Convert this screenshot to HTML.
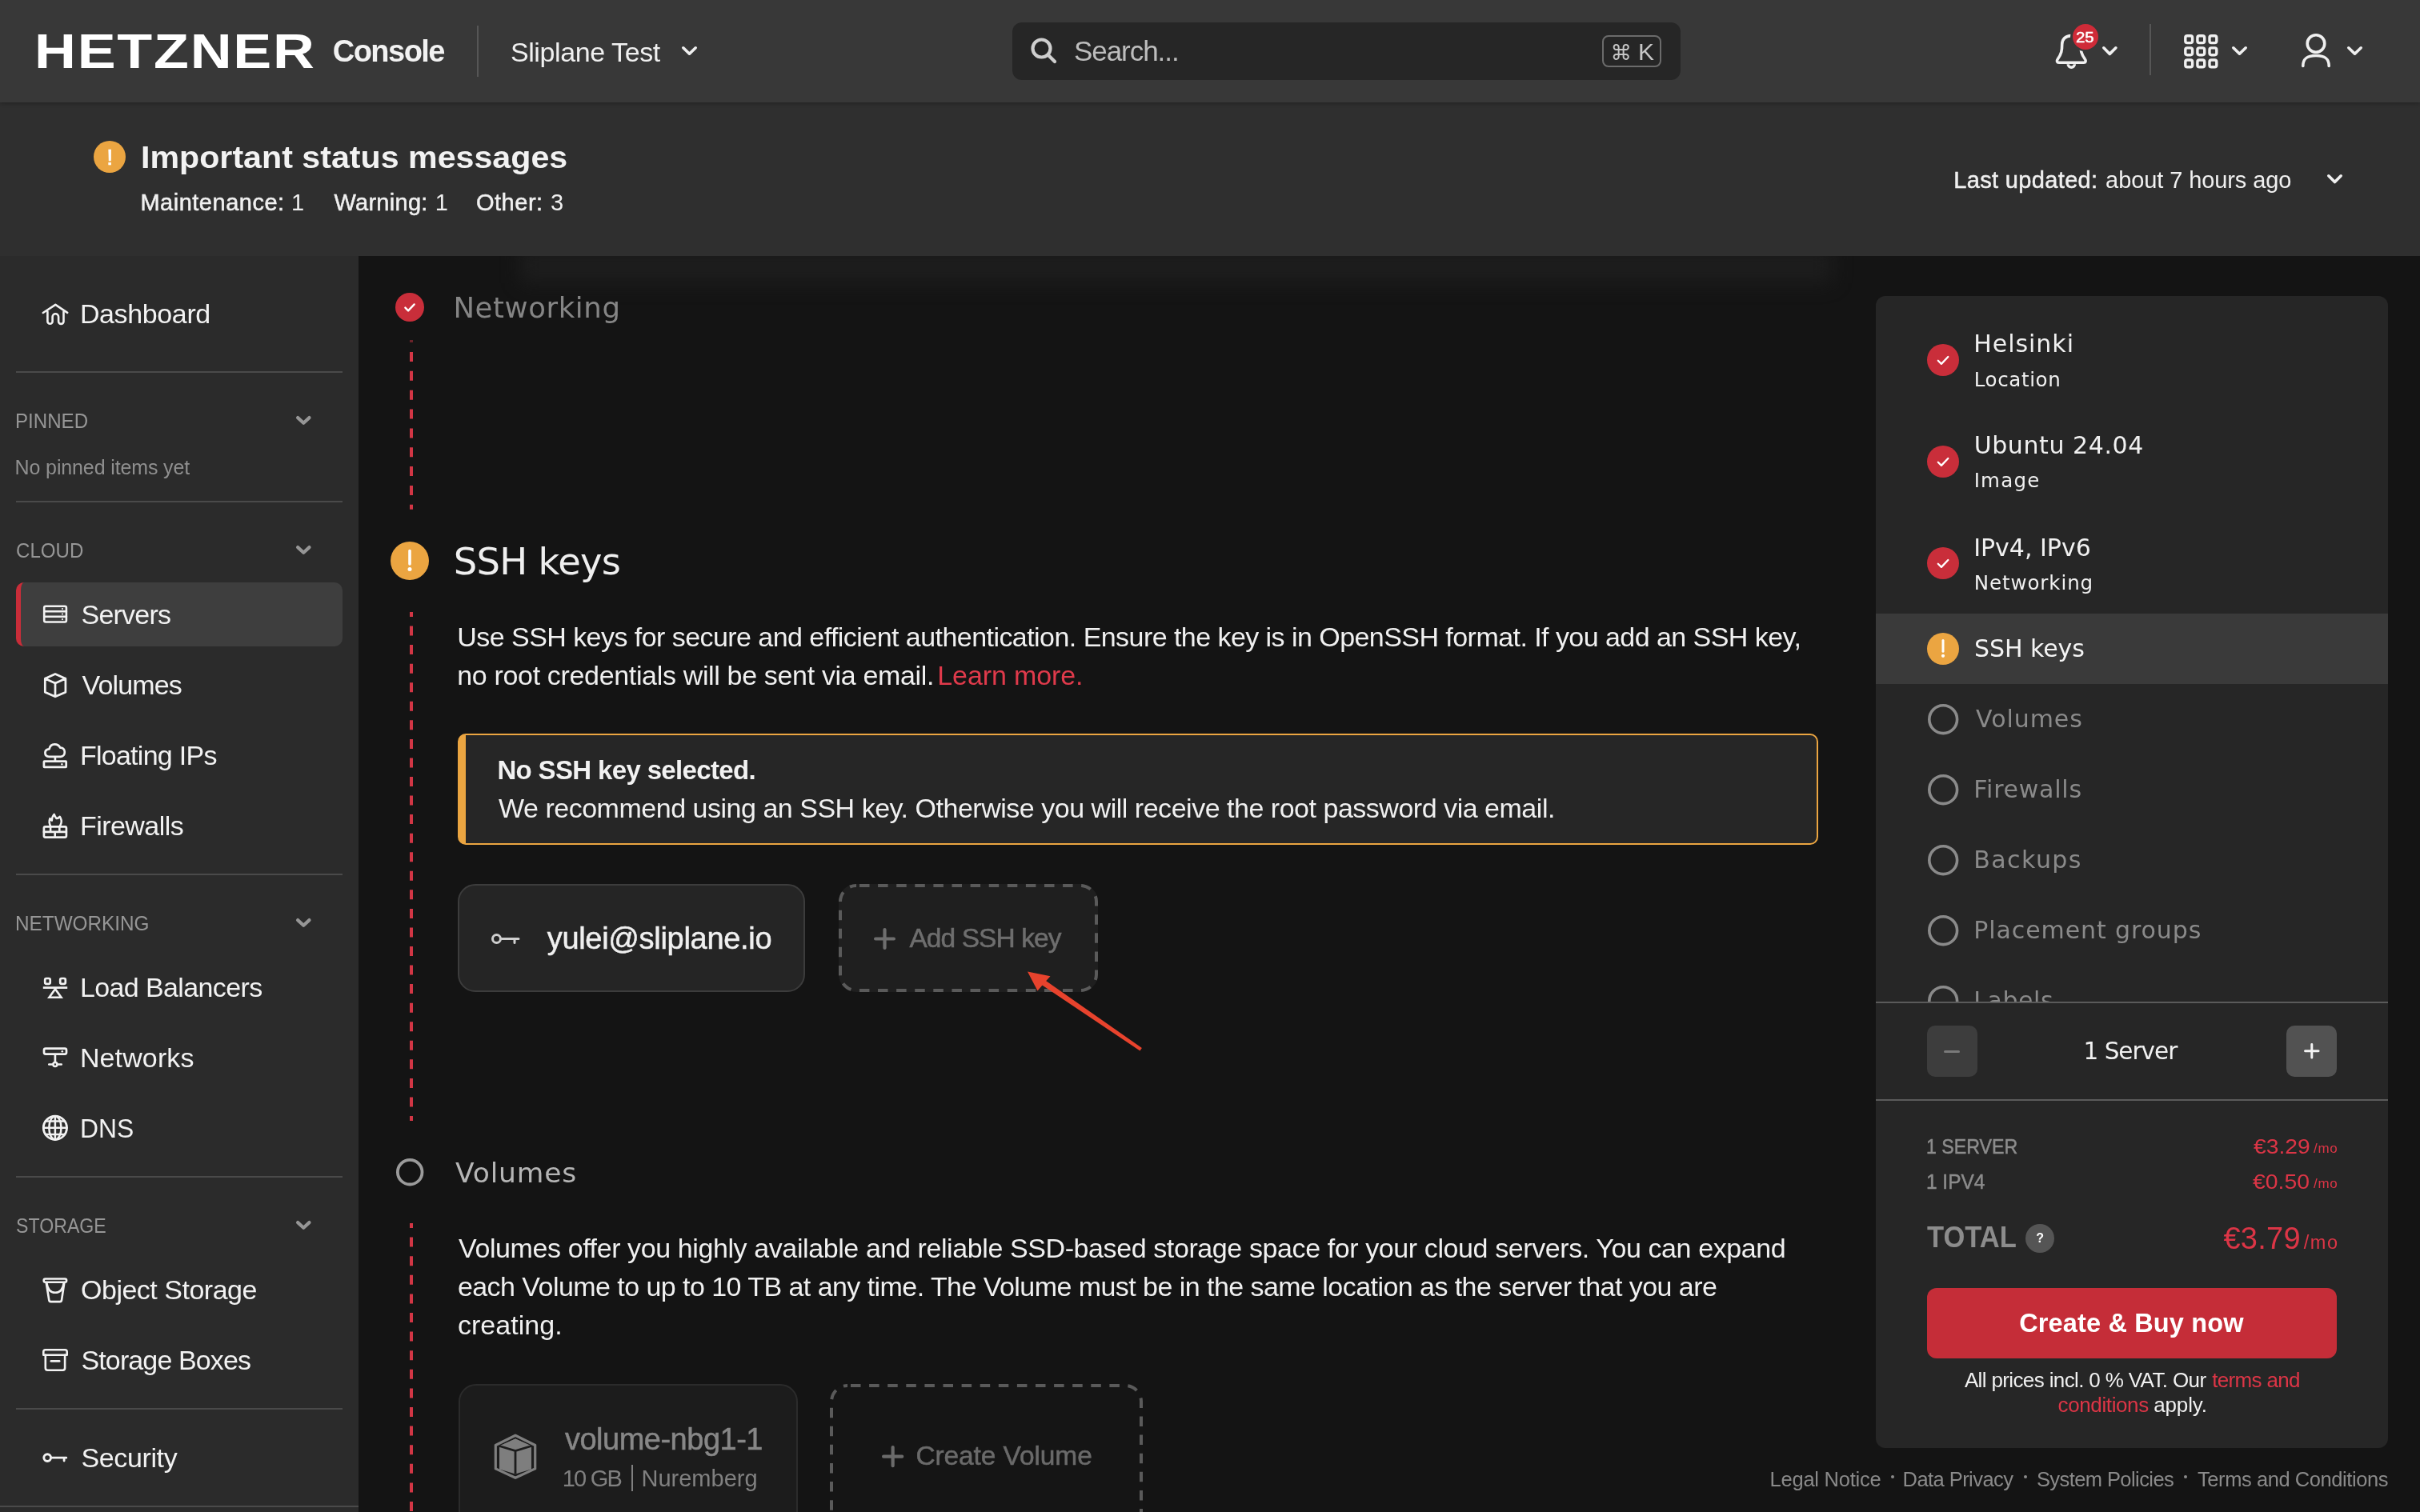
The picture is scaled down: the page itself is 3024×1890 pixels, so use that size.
<!DOCTYPE html>
<html lang="en"><head><meta charset="utf-8"><title>Hetzner Console</title><style>
*{box-sizing:border-box;margin:0;padding:0}
html,body{width:3024px;height:1890px;overflow:hidden;background:#141414}
body{position:relative;font-family:"Liberation Sans",sans-serif;color:#f0f0f0}
body *{position:absolute}
.t{white-space:nowrap;line-height:0;display:block}
svg{overflow:visible}
header,section,nav,main,aside,footer{will-change:transform}
h1,h2,strong,p,a,button{font-weight:400;font-family:inherit}
button{border:0}
a{text-decoration:none}
@media (max-width:1600px){html{zoom:.5}}
</style></head>
<body>
<header style="left:0px;top:0px;width:3024px;height:128px;background:#383838;box-shadow:0 1px 5px rgba(0,0,0,.3);z-index:5">
<span class="t" style='left:42.5px;top:63.9px;font-size:61.0px;color:#ffffff;font-weight:700;letter-spacing:1.50px;transform-origin:0 0;transform:scaleX(1.178);'>HETZNER</span>
<span class="t" style='left:415.8px;top:63.8px;font-size:38.0px;color:#f2f2f2;font-weight:700;letter-spacing:-1.54px;'>Console</span>
<div style="left:596px;top:32px;width:2px;height:64px;background:#565656"></div>
<span class="t" style='left:637.9px;top:64.5px;font-size:34.0px;color:#f0f0f0;letter-spacing:-0.40px;'>Sliplane Test</span>
<svg style="left:852px;top:57.5px;" width="19" height="11.0" viewBox="0 0 19 11.0" fill="none"><polyline points="1.8,1.8 9.5,9.2 17.2,1.8" stroke="#f0f0f0" stroke-width="3.6" stroke-linecap="round" stroke-linejoin="round"/></svg>
<div style="left:1265px;top:28px;width:835px;height:72px;background:#262626;border-radius:12px">
<svg style="left:22px;top:18px;" width="36" height="36" viewBox="0 0 36 36" fill="none"><circle cx="14.5" cy="14.5" r="11" stroke="#cfcfcf" stroke-width="4.2"/><path d="M23 23 L31 31" stroke="#cfcfcf" stroke-width="4.2" stroke-linecap="round"/></svg>
<span class="t" style='left:76.9px;top:35.9px;font-size:35.0px;color:#bdbdbd;letter-spacing:-1.03px;'>Search...</span>
<div style="left:737px;top:16px;width:74px;height:40px;border:2px solid #6b6b6b;border-radius:8px"></div>
<span class="t" style='left:747.6px;top:38.3px;font-size:26.5px;color:#c6c6c6;font-family:"DejaVu Sans", "Liberation Sans", sans-serif;'>⌘</span>
<span class="t" style='left:782.0px;top:36.5px;font-size:30.0px;color:#c6c6c6;'>K</span>
</div>
<svg style="left:2566px;top:40px;" width="46" height="50" viewBox="0 0 46 50" fill="none"><path d="M22.3 4.6 C15 4.6 10.7 9 10.7 15.5 C10.7 23 10 27.5 5.2 34 C3.6 36 4.3 38.2 6.8 38.2 H37.8 C40.3 38.2 41 36 39.4 34 C34.6 27.5 33.9 23 33.9 15.5 C33.9 9 29.6 4.6 22.3 4.6 Z" stroke="#f0f0f0" stroke-width="3.6" stroke-linejoin="round"/><path d="M18.2 40.2 A4.1 4.1 0 0 0 26.4 40.2" stroke="#f0f0f0" stroke-width="3.4" stroke-linecap="butt"/></svg>
<div style="left:2587.4px;top:28px;width:36.4px;height:36.4px;background:#383838;border-radius:50%"></div>
<div style="left:2589.6px;top:30.2px;width:32px;height:32px;background:#cf2b38;border-radius:50%"></div>
<span class="t" style='left:2594.2px;top:46.6px;font-size:18.0px;color:#fff;-webkit-text-stroke:0.5px;transform-origin:0 50%;transform:scaleX(1.1329);'>25</span>
<svg style="left:2626.5px;top:57.5px;" width="18.699999999999818" height="11.200000000000003" viewBox="0 0 18.699999999999818 11.200000000000003" fill="none"><polyline points="1.8,1.8 9.3,9.4 16.9,1.8" stroke="#f0f0f0" stroke-width="3.6" stroke-linecap="round" stroke-linejoin="round"/></svg>
<div style="left:2686px;top:30px;width:2px;height:64px;background:#565656"></div>
<svg style="left:2729px;top:43px;" width="43" height="43" viewBox="0 0 43 43" fill="none"><rect x="1.8" y="1.8" width="8.8" height="8.8" rx="2.4" stroke="#f0f0f0" stroke-width="3.4"/><rect x="16.9" y="1.8" width="8.8" height="8.8" rx="2.4" stroke="#f0f0f0" stroke-width="3.4"/><rect x="32.0" y="1.8" width="8.8" height="8.8" rx="2.4" stroke="#f0f0f0" stroke-width="3.4"/><rect x="1.8" y="16.9" width="8.8" height="8.8" rx="2.4" stroke="#f0f0f0" stroke-width="3.4"/><rect x="16.9" y="16.9" width="8.8" height="8.8" rx="2.4" stroke="#f0f0f0" stroke-width="3.4"/><rect x="32.0" y="16.9" width="8.8" height="8.8" rx="2.4" stroke="#f0f0f0" stroke-width="3.4"/><rect x="1.8" y="32.0" width="8.8" height="8.8" rx="2.4" stroke="#f0f0f0" stroke-width="3.4"/><rect x="16.9" y="32.0" width="8.8" height="8.8" rx="2.4" stroke="#f0f0f0" stroke-width="3.4"/><rect x="32.0" y="32.0" width="8.8" height="8.8" rx="2.4" stroke="#f0f0f0" stroke-width="3.4"/></svg>
<svg style="left:2788.5px;top:58px;" width="19.0" height="11" viewBox="0 0 19.0 11" fill="none"><polyline points="1.8,1.8 9.5,9.2 17.2,1.8" stroke="#f0f0f0" stroke-width="3.6" stroke-linecap="round" stroke-linejoin="round"/></svg>
<svg style="left:2874px;top:40px;" width="42" height="46" viewBox="0 0 42 46" fill="none"><circle cx="20" cy="14.5" r="10.8" stroke="#f0f0f0" stroke-width="3.6"/><path d="M3.8 42.5 C3.8 33 9 29.5 20 29.5 C31 29.5 36.2 33 36.2 42.5" stroke="#f0f0f0" stroke-width="3.6" stroke-linecap="round"/></svg>
<svg style="left:2932.5px;top:58px;" width="19.0" height="11" viewBox="0 0 19.0 11" fill="none"><polyline points="1.8,1.8 9.5,9.2 17.2,1.8" stroke="#f0f0f0" stroke-width="3.6" stroke-linecap="round" stroke-linejoin="round"/></svg>
</header>
<section style="left:0px;top:128px;width:3024px;height:192px;background:#2f2f2f;z-index:4">
<div style="left:117px;top:48px;width:40px;height:40px;background:#eba541;border-radius:50%"></div>
<span class="t" style='left:133.2px;top:67.7px;font-size:28.5px;color:#fff;-webkit-text-stroke:0.7px;'>!</span>
<h1 class="t" style='left:176.0px;top:69.3px;font-size:39.0px;color:#f2f2f2;font-weight:700;transform-origin:0 50%;transform:scaleX(1.0559);'>Important status messages</h1>
<span class="t" style='left:175.4px;top:124.9px;font-size:29.0px;color:#f0f0f0;letter-spacing:0.51px;-webkit-text-stroke:0.5px;'>Maintenance:</span>
<span class="t" style='left:363.9px;top:124.9px;font-size:29.0px;color:#f0f0f0;'>1</span>
<span class="t" style='left:417.4px;top:124.9px;font-size:29.0px;color:#f0f0f0;letter-spacing:0.29px;-webkit-text-stroke:0.5px;'>Warning:</span>
<span class="t" style='left:543.7px;top:124.9px;font-size:29.0px;color:#f0f0f0;'>1</span>
<span class="t" style='left:594.9px;top:124.9px;font-size:29.0px;color:#f0f0f0;letter-spacing:0.54px;-webkit-text-stroke:0.5px;'>Other:</span>
<span class="t" style='left:688.1px;top:124.9px;font-size:29.0px;color:#f0f0f0;'>3</span>
<span class="t" style='left:2441.3px;top:97.2px;font-size:29.0px;color:#f0f0f0;letter-spacing:0.34px;-webkit-text-stroke:0.5px;'>Last updated:</span>
<span class="t" style='left:2631.1px;top:97.2px;font-size:29.0px;color:#f0f0f0;letter-spacing:-0.09px;'>about 7 hours ago</span>
<svg style="left:2908px;top:89.6px;" width="19" height="11.400000000000006" viewBox="0 0 19 11.400000000000006" fill="none"><polyline points="1.8,1.8 9.5,9.6 17.2,1.8" stroke="#f0f0f0" stroke-width="3.6" stroke-linecap="round" stroke-linejoin="round"/></svg>
</section>
<nav style="left:0px;top:320px;width:448px;height:1570px;background:#2b2b2b">
<svg style="left:52px;top:55px;" width="34" height="34" viewBox="0 0 34 34" fill="none"><path d="M1.8 16 L17.3 5.9 L32.2 15.8" stroke="#f2f2f2" stroke-width="2.6" stroke-linecap="round" stroke-linejoin="round"/><path d="M7.4 14.5 V26.7 A3.1 3.1 0 0 0 13.6 26.7 V21 A3.75 3.75 0 0 1 21.1 21 V26.7 A3.2 3.2 0 0 0 27.5 26.7 V14.5" stroke="#f2f2f2" stroke-width="2.6" stroke-linecap="round" stroke-linejoin="round"/></svg>
<span class="t" style='left:99.9px;top:72.2px;font-size:34.0px;color:#f2f2f2;letter-spacing:-0.37px;'>Dashboard</span>
<div style="left:20px;top:144px;width:408px;height:2px;background:#4a4a4a"></div>
<h2 class="t" style='left:18.7px;top:206.1px;font-size:25.0px;color:#969696;transform-origin:0 50%;transform:scaleX(0.9647);'>PINNED</h2>
<svg style="left:369.8px;top:200.19999999999993px;" width="18.599999999999966" height="10.800000000000068" viewBox="0 0 18.599999999999966 10.800000000000068" fill="none"><polyline points="2.1,2.1 9.3,8.7 16.5,2.1" stroke="#969696" stroke-width="4.2" stroke-linecap="round" stroke-linejoin="round"/></svg>
<span class="t" style='left:18.6px;top:263.8px;font-size:25.0px;color:#8f8f8f;letter-spacing:-0.13px;'>No pinned items yet</span>
<div style="left:20px;top:306px;width:408px;height:2px;background:#4a4a4a"></div>
<h2 class="t" style='left:19.5px;top:367.8px;font-size:25.0px;color:#969696;transform-origin:0 50%;transform:scaleX(0.9640);'>CLOUD</h2>
<svg style="left:369.8px;top:361.9px;" width="18.599999999999966" height="10.800000000000068" viewBox="0 0 18.599999999999966 10.800000000000068" fill="none"><polyline points="2.1,2.1 9.3,8.7 16.5,2.1" stroke="#969696" stroke-width="4.2" stroke-linecap="round" stroke-linejoin="round"/></svg>
<div style="left:20px;top:408px;width:408px;height:80px;background:#3e3e3e;border-radius:10px;border-left:6px solid #c92d39"></div>
<svg style="left:52px;top:431px;" width="34" height="34" viewBox="0 0 34 34" fill="none"><rect x="3.2" y="6.8" width="27.7" height="19.7" rx="2" stroke="#f2f2f2" stroke-width="2.6" stroke-linecap="round" stroke-linejoin="round"/><path d="M3.2 13.2 H30.9 M3.2 19.8 H30.9" stroke="#f2f2f2" stroke-width="2.6" stroke-linecap="round" stroke-linejoin="round"/><circle cx="26" cy="10" r="1.1" fill="#f2f2f2"/><circle cx="26" cy="16.5" r="1.1" fill="#f2f2f2"/><circle cx="26" cy="23.1" r="1.1" fill="#f2f2f2"/></svg>
<span class="t" style='left:101.5px;top:448.2px;font-size:34.0px;color:#f2f2f2;letter-spacing:-0.77px;'>Servers</span>
<svg style="left:52px;top:519px;" width="34" height="34" viewBox="0 0 34 34" fill="none"><path d="M17 3.6 L29.9 9.2 V26.2 L17 31.8 L4.3 26.2 V9.2 Z M4.3 9.2 L17 14.9 L29.9 9.2 M17 14.9 V31.8" stroke="#f2f2f2" stroke-width="2.7" stroke-linecap="round" stroke-linejoin="round"/></svg>
<span class="t" style='left:102.6px;top:536.2px;font-size:34.0px;color:#f2f2f2;letter-spacing:-0.87px;'>Volumes</span>
<svg style="left:52px;top:607px;" width="34" height="34" viewBox="0 0 34 34" fill="none"><path d="M9.5 18.8 C6 18.8 4.4 16.6 4.4 14.1 C4.4 11.1 6.7 9.4 9.6 9.3 C10.3 5.6 13 3.4 16.3 3.4 C19.5 3.4 22 5.1 23.2 7.7 C26.5 7.3 28.8 9.9 28.8 13.1 C28.8 16.4 26.7 18.8 24 18.8 Z" stroke="#f2f2f2" stroke-width="2.7" stroke-linecap="round" stroke-linejoin="round"/><path d="M16.9 18.8 V24.7" stroke="#f2f2f2" stroke-width="2.7" stroke-linecap="butt" stroke-linejoin="miter"/><rect x="2.9" y="24.7" width="27.8" height="7.1" rx="0.6" stroke="#f2f2f2" stroke-width="2.7" stroke-linecap="butt" stroke-linejoin="miter"/><circle cx="25.4" cy="28.2" r="1.2" fill="#f2f2f2"/></svg>
<span class="t" style='left:99.9px;top:624.2px;font-size:34.0px;color:#f2f2f2;letter-spacing:-0.73px;'>Floating IPs</span>
<svg style="left:52px;top:695px;" width="34" height="34" viewBox="0 0 34 34" fill="none"><rect x="2.9" y="18.3" width="28" height="13.3" rx="1.8" stroke="#f2f2f2" stroke-width="2.7" stroke-linecap="round" stroke-linejoin="round"/><path d="M2.9 24.9 H30.9 M11.1 18.3 V24.9 M22.3 18.3 V24.9 M16.7 24.9 V31.6" stroke="#f2f2f2" stroke-width="2.6" stroke-linecap="round" stroke-linejoin="round"/><path d="M11.5 18.3 C9.5 15 9 11.5 10.5 8.1 C11.3 9.5 12 10.3 12.8 10.6 C13 7 14 4.5 15.7 2.8 C16.5 5.5 17.8 7 18.6 8.1 C20 8 21.8 7 22.7 5.7 C24.5 8.5 25.2 11.5 24.4 14 C24 15.8 23.2 17 22.3 18.3" stroke="#f2f2f2" stroke-width="2.5" stroke-linecap="round" stroke-linejoin="round"/></svg>
<span class="t" style='left:99.9px;top:712.2px;font-size:34.0px;color:#f2f2f2;letter-spacing:-0.53px;'>Firewalls</span>
<div style="left:20px;top:772px;width:408px;height:2px;background:#4a4a4a"></div>
<h2 class="t" style='left:18.7px;top:834.1px;font-size:25.0px;color:#969696;transform-origin:0 50%;transform:scaleX(0.9727);'>NETWORKING</h2>
<svg style="left:369.8px;top:828.2px;" width="18.599999999999966" height="10.799999999999955" viewBox="0 0 18.599999999999966 10.799999999999955" fill="none"><polyline points="2.1,2.1 9.3,8.7 16.5,2.1" stroke="#969696" stroke-width="4.2" stroke-linecap="round" stroke-linejoin="round"/></svg>
<svg style="left:52px;top:897px;" width="34" height="34" viewBox="0 0 34 34" fill="none"><rect x="4.2" y="6" width="6.5" height="6.8" rx="1.8" stroke="#f2f2f2" stroke-width="2.7" stroke-linecap="round" stroke-linejoin="round"/><rect x="23.2" y="6" width="6.6" height="6.8" rx="1.8" stroke="#f2f2f2" stroke-width="2.7" stroke-linecap="round" stroke-linejoin="round"/><path d="M1.8 17.6 H32.2" stroke="#f2f2f2" stroke-width="2.7" stroke-linecap="butt" stroke-linejoin="miter"/><path d="M17 19.2 L9.5 29.7 H24.5 Z" stroke="#f2f2f2" stroke-width="2.6" stroke-linejoin="miter"/></svg>
<span class="t" style='left:99.9px;top:914.2px;font-size:34.0px;color:#f2f2f2;letter-spacing:-0.61px;'>Load Balancers</span>
<svg style="left:52px;top:985px;" width="34" height="34" viewBox="0 0 34 34" fill="none"><rect x="3" y="5.6" width="28" height="7" rx="2" stroke="#f2f2f2" stroke-width="2.7" stroke-linecap="round" stroke-linejoin="round"/><circle cx="25.8" cy="9.2" r="1.3" fill="#f2f2f2"/><path d="M16.9 12.6 V22.5" stroke="#f2f2f2" stroke-width="2.7" stroke-linecap="butt" stroke-linejoin="miter"/><circle cx="16.9" cy="25.5" r="2.5" stroke="#f2f2f2" stroke-width="2.5" stroke-linecap="round" stroke-linejoin="round"/><path d="M9.3 25.5 H14 M19.8 25.5 H24.7" stroke="#f2f2f2" stroke-width="2.7" stroke-linecap="round" stroke-linejoin="round"/></svg>
<span class="t" style='left:99.9px;top:1002.2px;font-size:34.0px;color:#f2f2f2;letter-spacing:0.13px;'>Networks</span>
<svg style="left:52px;top:1073px;" width="34" height="34" viewBox="0 0 34 34" fill="none"><circle cx="16.9" cy="16.8" r="14.6" stroke="#f2f2f2" stroke-width="2.8" stroke-linecap="round" stroke-linejoin="round"/><ellipse cx="16.9" cy="16.8" rx="7.6" ry="14.6" stroke="#f2f2f2" stroke-width="2.5" stroke-linecap="round" stroke-linejoin="round"/><path d="M16.9 2.2 V31.4 M2.3 16.8 H31.5 M4.9 8.6 H28.9 M4.9 25 H28.9" stroke="#f2f2f2" stroke-width="2.5" stroke-linecap="round" stroke-linejoin="round"/></svg>
<span class="t" style='left:100.1px;top:1090.2px;font-size:34.0px;color:#f2f2f2;transform-origin:0 50%;transform:scaleX(0.9365);'>DNS</span>
<div style="left:20px;top:1150px;width:408px;height:2px;background:#4a4a4a"></div>
<h2 class="t" style='left:19.9px;top:1212.1px;font-size:25.0px;color:#969696;transform-origin:0 50%;transform:scaleX(0.9262);'>STORAGE</h2>
<svg style="left:369.8px;top:1206.2px;" width="18.599999999999966" height="10.799999999999955" viewBox="0 0 18.599999999999966 10.799999999999955" fill="none"><polyline points="2.1,2.1 9.3,8.7 16.5,2.1" stroke="#969696" stroke-width="4.2" stroke-linecap="round" stroke-linejoin="round"/></svg>
<svg style="left:52px;top:1275px;" width="34" height="34" viewBox="0 0 34 34" fill="none"><rect x="2.7" y="3.5" width="28.4" height="4.2" rx="2" stroke="#f2f2f2" stroke-width="2.6" stroke-linecap="round" stroke-linejoin="round"/><path d="M5.7 8 L9.3 30.2 Q9.6 32.1 11.5 32.1 H22.8 Q24.7 32.1 25 30.2 L28.4 8" stroke="#f2f2f2" stroke-width="2.6" stroke-linecap="round" stroke-linejoin="round"/><path d="M6.4 9 C7.5 17 11 20.8 17 20.8 C23 20.8 26.6 17 27.7 9" stroke="#f2f2f2" stroke-width="2.6" stroke-linecap="round" stroke-linejoin="round"/></svg>
<span class="t" style='left:101.0px;top:1292.2px;font-size:34.0px;color:#f2f2f2;letter-spacing:-0.49px;'>Object Storage</span>
<svg style="left:52px;top:1363px;" width="34" height="34" viewBox="0 0 34 34" fill="none"><path d="M2.3 10.7 V6.8 Q2.3 4.3 4.8 4.3 H29.2 Q31.7 4.3 31.7 6.8 V10.7 Z" stroke="#f2f2f2" stroke-width="2.6" stroke-linecap="round" stroke-linejoin="round"/><path d="M4.8 10.7 V27 Q4.8 29.7 7.5 29.7 H26.4 Q29.1 29.7 29.1 27 V10.7" stroke="#f2f2f2" stroke-width="2.6" stroke-linecap="round" stroke-linejoin="round"/><path d="M11.8 18.4 H22.2" stroke="#f2f2f2" stroke-width="2.6" stroke-linecap="round" stroke-linejoin="round"/></svg>
<span class="t" style='left:101.5px;top:1380.2px;font-size:34.0px;color:#f2f2f2;letter-spacing:-0.88px;'>Storage Boxes</span>
<div style="left:20px;top:1440px;width:408px;height:2px;background:#4a4a4a"></div>
<svg style="left:52px;top:1485px;" width="34" height="34" viewBox="0 0 34 34" fill="none"><circle cx="7.2" cy="17.1" r="4.4" stroke="#f2f2f2" stroke-width="2.9" stroke-linecap="round" stroke-linejoin="round"/><path d="M11.6 17.2 H30.8 M28.1 17.2 V21" stroke="#f2f2f2" stroke-width="2.8" stroke-linecap="round" stroke-linejoin="round"/></svg>
<span class="t" style='left:101.5px;top:1502.2px;font-size:34.0px;color:#f2f2f2;letter-spacing:-0.38px;'>Security</span>
<div style="left:0px;top:1562px;width:448px;height:2px;background:#4a4a4a"></div>
</nav>
<main style="left:448px;top:320px;width:1895px;height:1570px;background:#141414;overflow:hidden">
<div style="left:202px;top:-10px;width:1640px;height:44px;background:#1e1e1e;filter:blur(12px);opacity:.9"></div>
<svg style="left:46px;top:46px;" width="36" height="36" viewBox="0 0 36 36" fill="none"><circle cx="18" cy="18" r="18" fill="#c92e3a"/><path d="M12.4 18.6 l3.7 3.8 l7.6 -8.0" stroke="#fff" stroke-width="2.4" stroke-linecap="round" stroke-linejoin="round"/></svg>
<h2 class="t" style='left:118.4px;top:65.0px;font-size:35.5px;color:#858585;font-family:"DejaVu Sans", "Liberation Sans", sans-serif;letter-spacing:0.60px;'>Networking</h2>
<svg style="left:64px;top:120.19999999999999px;overflow:hidden" width="4" height="196.8" viewBox="0 0 4 196.8" fill="none"><line x1="2" y1="0" x2="2" y2="196.8" stroke="#d23645" stroke-width="4" stroke-dasharray="12 11.850" stroke-dashoffset="0"/></svg>
<div style="left:64px;top:104.5px;width:4px;height:3.5px;background:#d23645;opacity:.45"></div>
<svg style="left:40px;top:357px;" width="48" height="48" viewBox="0 0 48 48" fill="none"><circle cx="24" cy="24" r="24" fill="#eba541"/><path d="M24 11.5 V28.0" stroke="#fff" stroke-width="3.6" stroke-linecap="round"/><circle cx="24" cy="34.5" r="2.5" fill="#fff"/></svg>
<h2 class="t" style='left:118.8px;top:381.9px;font-size:46.5px;color:#efefef;font-family:"DejaVu Sans", "Liberation Sans", sans-serif;letter-spacing:-0.74px;'>SSH keys</h2>
<svg style="left:64px;top:445px;overflow:hidden" width="4" height="636" viewBox="0 0 4 636" fill="none"><line x1="2" y1="0" x2="2" y2="636" stroke="#d23645" stroke-width="4" stroke-dasharray="12 11.556" stroke-dashoffset="6"/></svg>
<p class="t" style='left:123.3px;top:476.0px;font-size:34.0px;color:#f0f0f0;letter-spacing:-0.55px;'>Use SSH keys for secure and efficient authentication. Ensure the key is in OpenSSH format. If you add an SSH key,</p>
<p class="t" style='left:123.3px;top:523.9px;font-size:34.0px;color:#f0f0f0;letter-spacing:-0.34px;'>no root credentials will be sent via email.</p>
<a class="t" style='left:723.3px;top:523.9px;font-size:34.0px;color:#e03a4b;letter-spacing:-0.11px;'>Learn more.</a>
<div style="left:124px;top:597px;width:1700px;height:139px;background:#262626;border:2px solid #eba541;border-left-width:10px;border-radius:10px">
</div>
<strong class="t" style='left:173.4px;top:642.6px;font-size:33.0px;color:#f2f2f2;font-weight:700;letter-spacing:-0.65px;'>No SSH key selected.</strong>
<p class="t" style='left:175.0px;top:690.2px;font-size:34.0px;color:#f0f0f0;letter-spacing:-0.48px;'>We recommend using an SSH key. Otherwise you will receive the root password via email.</p>
<div style="left:124px;top:785px;width:434px;height:135px;background:#252525;border:2px solid #3c3c3c;border-radius:22px"></div>
<svg style="left:165px;top:836px;" width="38" height="34" viewBox="0 0 38 34" fill="none"><circle cx="7.5" cy="17.5" r="5" stroke="#cfcfcf" stroke-width="3"/><path d="M12.5 17.5 H35 M30 17.5 V22.5" stroke="#cfcfcf" stroke-width="3" stroke-linecap="round"/></svg>
<span class="t" style='left:235.7px;top:852.8px;font-size:38.0px;color:#f0f0f0;letter-spacing:-0.30px;-webkit-text-stroke:0.5px;'>yulei@sliplane.io</span>
<div style="left:600px;top:785px;width:324px;height:135px;background:#1f1f1f;border-radius:22px"></div>
<svg style="left:600px;top:785px;" width="324" height="135" viewBox="0 0 324 135" fill="none"><rect x="2" y="2" width="320" height="131" rx="20" stroke="#5a5a5a" stroke-width="4" stroke-dasharray="12.5 10.6" stroke-dashoffset="-4"/></svg>
<svg style="left:643.5999999999999px;top:839.5px;" width="27.0" height="27.0" viewBox="0 0 27.0 27.0" fill="none"><path d="M13.5 2.1 V24.9 M2.1 13.5 H24.9" stroke="#6e6e6e" stroke-width="4.2" stroke-linecap="round"/></svg>
<span class="t" style='left:688.4px;top:853.2px;font-size:33.5px;color:#6e6e6e;letter-spacing:-0.91px;-webkit-text-stroke:0.5px;'>Add SSH key</span>
<svg style="left:822px;top:880px;" width="170" height="125" viewBox="0 0 170 125" fill="none"><path d="M156.9 110 L154.5 113.6 L30.1 30 L34.1 24 Z" fill="#e8432d"/><path d="M14 14.6 L42.5 20.3 L35.5 28 L26.5 38.4 Z" fill="#e8432d"/></svg>
<svg style="left:46.80000000000001px;top:1127.8px;" width="34.4" height="34.4" viewBox="0 0 34.4 34.4" fill="none"><circle cx="17.2" cy="17.2" r="15.299999999999999" stroke="#9b9b9b" stroke-width="3.8"/></svg>
<h2 class="t" style='left:121.0px;top:1146.1px;font-size:34.5px;color:#b5b5b5;font-family:"DejaVu Sans", "Liberation Sans", sans-serif;letter-spacing:0.83px;'>Volumes</h2>
<svg style="left:64px;top:1209px;overflow:hidden" width="4" height="361" viewBox="0 0 4 361" fill="none"><line x1="2" y1="0" x2="2" y2="361" stroke="#d23645" stroke-width="4" stroke-dasharray="12 11.600" stroke-dashoffset="6"/></svg>
<p class="t" style='left:125.0px;top:1240.2px;font-size:34.0px;color:#f0f0f0;letter-spacing:-0.40px;'>Volumes offer you highly available and reliable SSD-based storage space for your cloud servers. You can expand</p>
<p class="t" style='left:123.9px;top:1288.0px;font-size:34.0px;color:#f0f0f0;letter-spacing:-0.55px;'>each Volume to up to 10 TB at any time. The Volume must be in the same location as the server that you are</p>
<p class="t" style='left:123.9px;top:1335.7px;font-size:34.0px;color:#f0f0f0;letter-spacing:0.05px;'>creating.</p>
<div style="left:125px;top:1410px;width:424px;height:182px;background:#1c1c1c;border:2px solid #2b2b2b;border-radius:22px"></div>
<svg style="left:162px;top:1465px;" width="70" height="70" viewBox="0 0 70 70" fill="none"><path d="M34 9.3 L58.7 21.5 V50.9 L34 62.3 L9.3 50.9 V21.5 Z" stroke="#7e7e7e" stroke-width="3.2" stroke-linejoin="round"/><path d="M34 13.6 L54 22.5 V51.6 L34 57.4 L14 51.6 V22.5 Z" fill="#7e7e7e"/><path d="M34 13.6 L54 22.5 V48.3 L34 57.4 L14 48.3 V22.5 Z" fill="#7e7e7e"/><path d="M14 22.5 L34 28.6 L54 22.5 M34 28.6 V57.4" stroke="#1c1c1c" stroke-width="2.8"/></svg>
<span class="t" style='left:257.9px;top:1479.3px;font-size:38.0px;color:#878787;letter-spacing:-0.49px;-webkit-text-stroke:0.5px;'>volume-nbg1-1</span>
<span class="t" style='left:254.7px;top:1527.7px;font-size:29.0px;color:#808080;letter-spacing:-1.77px;'>10 GB</span>
<span class="t" style='left:353.5px;top:1527.7px;font-size:29.0px;color:#808080;'>Nuremberg</span>
<div style="left:341px;top:1511px;width:2px;height:33px;background:#808080"></div>
<div style="left:589px;top:1410px;width:391px;height:182px;background:#151515;border-radius:22px"></div>
<svg style="left:589px;top:1410px;" width="391" height="182" viewBox="0 0 391 182" fill="none"><rect x="2" y="2" width="387" height="178" rx="20" stroke="#5a5a5a" stroke-width="4" stroke-dasharray="12.5 10.6" stroke-dashoffset="-4"/></svg>
<svg style="left:653.7px;top:1487.35px;" width="27.299999999999955" height="27.299999999999955" viewBox="0 0 27.299999999999955 27.299999999999955" fill="none"><path d="M13.649999999999977 2.1 V25.199999999999953 M2.1 13.649999999999977 H25.199999999999953" stroke="#6a6a6a" stroke-width="4.2" stroke-linecap="round"/></svg>
<span class="t" style='left:696.4px;top:1500.4px;font-size:33.5px;color:#6a6a6a;letter-spacing:-0.10px;-webkit-text-stroke:0.5px;'>Create Volume</span>
</main>
<aside style="left:2344px;top:370px;width:640px;height:1440px;background:#262626;border-radius:12px;overflow:hidden">
<div style="left:0px;top:0px;width:640px;height:882px;overflow:hidden">
<svg style="left:64px;top:60px;" width="40" height="40" viewBox="0 0 40 40" fill="none"><circle cx="20" cy="20" r="20" fill="#c92e3a"/><path d="M13.8 20.7 l4.1 4.2 l8.4 -8.9" stroke="#fff" stroke-width="2.3" stroke-linecap="round" stroke-linejoin="round"/></svg>
<span class="t" style='left:122.2px;top:60.4px;font-size:30.0px;color:#f0f0f0;font-family:"DejaVu Sans", "Liberation Sans", sans-serif;letter-spacing:0.97px;'>Helsinki</span>
<span class="t" style='left:122.7px;top:104.5px;font-size:24.5px;color:#f0f0f0;font-family:"DejaVu Sans", "Liberation Sans", sans-serif;letter-spacing:0.63px;'>Location</span>
<svg style="left:64px;top:187px;" width="40" height="40" viewBox="0 0 40 40" fill="none"><circle cx="20" cy="20" r="20" fill="#c92e3a"/><path d="M13.8 20.7 l4.1 4.2 l8.4 -8.9" stroke="#fff" stroke-width="2.3" stroke-linecap="round" stroke-linejoin="round"/></svg>
<span class="t" style='left:122.7px;top:187.3px;font-size:30.0px;color:#f0f0f0;font-family:"DejaVu Sans", "Liberation Sans", sans-serif;letter-spacing:0.58px;'>Ubuntu 24.04</span>
<span class="t" style='left:122.7px;top:231.4px;font-size:24.5px;color:#f0f0f0;font-family:"DejaVu Sans", "Liberation Sans", sans-serif;letter-spacing:1.21px;'>Image</span>
<svg style="left:64px;top:314px;" width="40" height="40" viewBox="0 0 40 40" fill="none"><circle cx="20" cy="20" r="20" fill="#c92e3a"/><path d="M13.8 20.7 l4.1 4.2 l8.4 -8.9" stroke="#fff" stroke-width="2.3" stroke-linecap="round" stroke-linejoin="round"/></svg>
<span class="t" style='left:122.2px;top:314.5px;font-size:30.0px;color:#f0f0f0;font-family:"DejaVu Sans", "Liberation Sans", sans-serif;letter-spacing:-0.01px;'>IPv4, IPv6</span>
<span class="t" style='left:122.7px;top:358.5px;font-size:24.5px;color:#f0f0f0;font-family:"DejaVu Sans", "Liberation Sans", sans-serif;letter-spacing:0.92px;'>Networking</span>
<div style="left:0px;top:397px;width:640px;height:88px;background:#3a3a3a"></div>
<svg style="left:64px;top:420.6px;" width="40" height="40" viewBox="0 0 40 40" fill="none"><circle cx="20" cy="20" r="20" fill="#eba541"/><path d="M20 9.6 V23.3" stroke="#fff" stroke-width="3.0" stroke-linecap="round"/><circle cx="20" cy="28.8" r="2.1" fill="#fff"/></svg>
<span class="t" style='left:123.1px;top:441.3px;font-size:30.0px;color:#f4f4f4;font-family:"DejaVu Sans", "Liberation Sans", sans-serif;letter-spacing:-0.08px;'>SSH keys</span>
<svg style="left:64.80000000000018px;top:509.5999999999999px;" width="38.4" height="38.4" viewBox="0 0 38.4 38.4" fill="none"><circle cx="19.2" cy="19.2" r="17.4" stroke="#8a8a8a" stroke-width="3.6"/></svg>
<span class="t" style='left:125.0px;top:528.9px;font-size:30.0px;color:#8a8a8a;font-family:"DejaVu Sans", "Liberation Sans", sans-serif;letter-spacing:0.95px;'>Volumes</span>
<svg style="left:64.80000000000018px;top:597.8px;" width="38.4" height="38.4" viewBox="0 0 38.4 38.4" fill="none"><circle cx="19.2" cy="19.2" r="17.4" stroke="#8a8a8a" stroke-width="3.6"/></svg>
<span class="t" style='left:122.2px;top:616.8px;font-size:30.0px;color:#8a8a8a;font-family:"DejaVu Sans", "Liberation Sans", sans-serif;letter-spacing:0.77px;'>Firewalls</span>
<svg style="left:64.80000000000018px;top:685.8px;" width="38.4" height="38.4" viewBox="0 0 38.4 38.4" fill="none"><circle cx="19.2" cy="19.2" r="17.4" stroke="#8a8a8a" stroke-width="3.6"/></svg>
<span class="t" style='left:122.2px;top:705.0px;font-size:30.0px;color:#8a8a8a;font-family:"DejaVu Sans", "Liberation Sans", sans-serif;letter-spacing:1.45px;'>Backups</span>
<svg style="left:64.80000000000018px;top:773.8px;" width="38.4" height="38.4" viewBox="0 0 38.4 38.4" fill="none"><circle cx="19.2" cy="19.2" r="17.4" stroke="#8a8a8a" stroke-width="3.6"/></svg>
<span class="t" style='left:122.2px;top:792.9px;font-size:30.0px;color:#8a8a8a;font-family:"DejaVu Sans", "Liberation Sans", sans-serif;letter-spacing:0.91px;'>Placement groups</span>
<svg style="left:64.80000000000018px;top:861.8px;" width="38.4" height="38.4" viewBox="0 0 38.4 38.4" fill="none"><circle cx="19.2" cy="19.2" r="17.4" stroke="#8a8a8a" stroke-width="3.6"/></svg>
<span class="t" style='left:122.2px;top:881.1px;font-size:30.0px;color:#8a8a8a;font-family:"DejaVu Sans", "Liberation Sans", sans-serif;letter-spacing:0.57px;'>Labels</span>
</div>
<div style="left:0px;top:882px;width:640px;height:2px;background:#5a5a5a"></div>
<div style="left:64px;top:912px;width:63px;height:64px;background:#3d3d3d;border-radius:10px"></div>
<div style="left:85px;top:942.5px;width:20px;height:3px;background:#7a7a7a;border-radius:2px"></div>
<div style="left:513px;top:912px;width:63px;height:64px;background:#525252;border-radius:10px"></div>
<svg style="left:535.1999999999998px;top:934.1999999999998px;" width="19.600000000000364" height="19.600000000000364" viewBox="0 0 19.600000000000364 19.600000000000364" fill="none"><path d="M9.800000000000182 1.5 V18.100000000000364 M1.5 9.800000000000182 H18.100000000000364" stroke="#f4f4f4" stroke-width="3" stroke-linecap="round"/></svg>
<span class="t" style='left:259.5px;top:944.4px;font-size:29.5px;color:#f0f0f0;font-family:"DejaVu Sans", "Liberation Sans", sans-serif;letter-spacing:-1.01px;'>1 Server</span>
<div style="left:0px;top:1004px;width:640px;height:2px;background:#5a5a5a"></div>
<span class="t" style='left:63.4px;top:1062.8px;font-size:25.5px;color:#8c8c8c;-webkit-text-stroke:0.5px;transform-origin:0 50%;transform:scaleX(0.9092);'>1 SERVER</span>
<span class="t" style='left:471.6px;top:1062.8px;font-size:25.5px;color:#dc3546;transform-origin:0 50%;transform:scaleX(1.1087);'>€3.29</span>
<span class="t" style='left:547.0px;top:1065.7px;font-size:17.0px;color:#dc3546;letter-spacing:0.68px;'>/mo</span>
<span class="t" style='left:63.3px;top:1107.0px;font-size:25.5px;color:#8c8c8c;-webkit-text-stroke:0.5px;transform-origin:0 50%;transform:scaleX(0.9580);'>1 IPV4</span>
<span class="t" style='left:470.8px;top:1107.0px;font-size:25.5px;color:#dc3546;transform-origin:0 50%;transform:scaleX(1.1143);'>€0.50</span>
<span class="t" style='left:547.0px;top:1109.9px;font-size:17.0px;color:#dc3546;letter-spacing:0.68px;'>/mo</span>
<span class="t" style='left:64.2px;top:1177.2px;font-size:37.0px;color:#8c8c8c;font-weight:700;transform-origin:0 50%;transform:scaleX(0.9324);'>TOTAL</span>
<div style="left:187px;top:1160px;width:36px;height:36px;background:#555;border-radius:50%"></div>
<span class="t" style='left:200.2px;top:1178.3px;font-size:16.0px;color:#fff;font-weight:700;'>?</span>
<span class="t" style='left:434.4px;top:1177.7px;font-size:38.0px;color:#dc3546;letter-spacing:0.26px;'>€3.79</span>
<span class="t" style='left:534.8px;top:1182.8px;font-size:23.5px;color:#dc3546;letter-spacing:1.49px;'>/mo</span>
<button style="left:64px;top:1240px;width:512px;height:88px;background:#c52d38;border-radius:12px"></button>
<span class="t" style='left:179.2px;top:1283.7px;font-size:32.5px;color:#fff;font-weight:700;letter-spacing:0.15px;'>Create &amp; Buy now</span>
<span class="t" style='left:110.9px;top:1355.2px;font-size:26.0px;color:#f0f0f0;letter-spacing:-0.63px;'>All prices incl. 0 % VAT. Our</span>
<a class="t" style='left:420.3px;top:1355.2px;font-size:26.0px;color:#dc3546;letter-spacing:-0.68px;'>terms and</a>
<a class="t" style='left:227.6px;top:1386.0px;font-size:26.0px;color:#dc3546;letter-spacing:-0.39px;'>conditions</a>
<span class="t" style='left:347.2px;top:1386.0px;font-size:26.0px;color:#f0f0f0;letter-spacing:-0.14px;'>apply.</span>
</aside>
<footer style="left:2200px;top:1830px;width:800px;height:40px;">
<a class="t" style='left:11.6px;top:19.0px;font-size:25.5px;color:#8a8a8a;letter-spacing:-0.25px;'>Legal Notice</a>
<a class="t" style='left:177.6px;top:19.0px;font-size:25.5px;color:#8a8a8a;letter-spacing:-0.56px;'>Data Privacy</a>
<a class="t" style='left:344.9px;top:19.0px;font-size:25.5px;color:#8a8a8a;letter-spacing:-0.58px;'>System Policies</a>
<a class="t" style='left:546.0px;top:19.0px;font-size:25.5px;color:#8a8a8a;letter-spacing:-0.43px;'>Terms and Conditions</a>
<div style="left:162.5999999999999px;top:14px;width:4px;height:4px;background:#8a8a8a;border-radius:50%"></div>
<div style="left:329.4000000000001px;top:14px;width:4px;height:4px;background:#8a8a8a;border-radius:50%"></div>
<div style="left:529.4000000000001px;top:14px;width:4px;height:4px;background:#8a8a8a;border-radius:50%"></div>
</footer>
</body></html>
